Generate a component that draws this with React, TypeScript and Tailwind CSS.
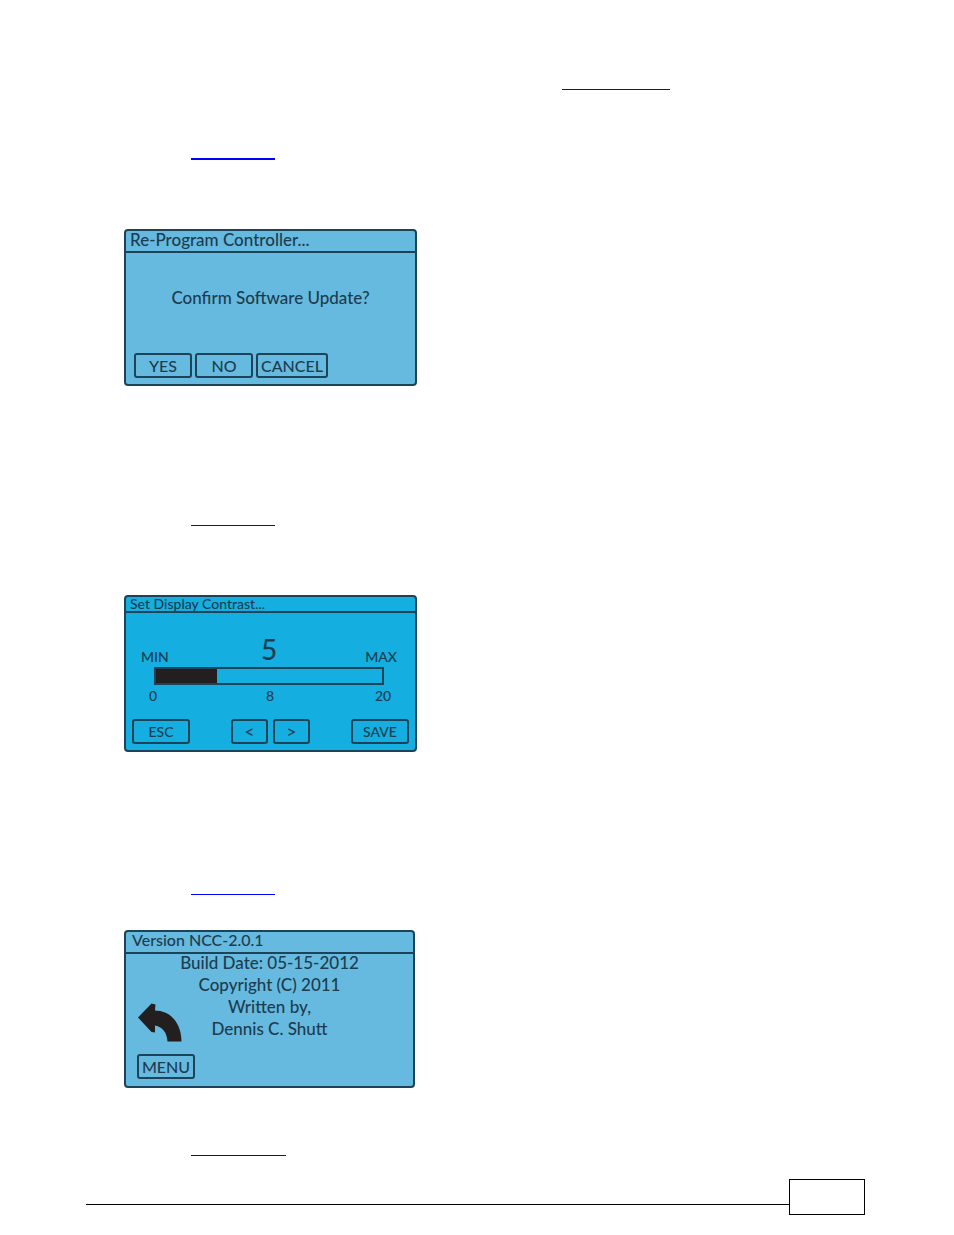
import type { ReactNode } from "react";

function LcdButton({ children, className = "w-[58px]" }: { children: ReactNode; className?: string }) {
  return (
    <button
      type="button"
      className={`flex h-[25px] items-center justify-center rounded-[3px] border-2 border-[#1d4358] ${className}`}
    >
      {children}
    </button>
  );
}

function Screen({ children, className }: { children: ReactNode; className: string }) {
  return (
    <section
      className={`ml-[38px] flex flex-col rounded-[4px] border-2 border-[#1d4358] font-medium text-[#1d3c4f] ${className}`}
    >
      {children}
    </section>
  );
}

function SectionLink({ className, label }: { className: string; label: string }) {
  return <a href="#" aria-label={label} className={`block h-5 border-[#0000ff] ${className}`} />;
}

function BackArrow() {
  return (
    <svg viewBox="0 0 45 40" className="h-10 w-[45px]" fill="#231f20" aria-hidden="true">
      <path d="M14.5 1.5 L18.5 2.5 L18 8.5 C34 8.500 44.500 22 44.500 39.5 H30.5 C30 31 26 25 18 23.5 L18 30.500 L14.500 30 L1 15.5 Z" />
    </svg>
  );
}

export default function App() {
  return (
    <div className="bg-white pt-[70px] pr-[89px] pb-5 pl-[86px] font-['Lato',sans-serif]">
      <main>
        <div className="flex justify-end pr-[195px]">
          <SectionLink label="Previous section" className="w-[108px] border-b" />
        </div>

        <SectionLink label="Software update" className="mt-[50px] ml-[105px] w-[84px] border-b-2" />

        {/* Software update prompt */}
        <Screen className="mt-[69px] h-[157px] w-[293px] bg-[#66badf] text-[17px]">
          <h2 className="h-[22px] border-b-2 border-[#1d4358] pl-1 leading-[18px]">Re-Program Controller...</h2>
          <p className="mt-8 text-center leading-[26px]">Confirm Software Update?</p>
          <div className="mt-auto mb-[6px] ml-2 flex gap-[3px] text-[16px]">
            <LcdButton>YES</LcdButton>
            <LcdButton>NO</LcdButton>
            <LcdButton className="w-[72px]">CANCEL</LcdButton>
          </div>
        </Screen>

        <SectionLink label="Display contrast" className="mt-[120px] ml-[105px] w-[84px] border-b" />

        {/* Display contrast */}
        <Screen className="mt-[69px] h-[157px] w-[293px] bg-[#14aee0] text-[14px]">
          <h2 className="h-4 border-b-2 border-[#1d4358] pl-1 leading-[14px]">Set Display Contrast...</h2>
          <div className="mt-[22px] flex h-8 items-end justify-between pr-[18px] pl-[15px] leading-5">
            <label htmlFor="contrast" className="w-8">MIN</label>
            <output htmlFor="contrast" className="text-[28px] leading-9">5</output>
            <span className="w-8 text-right">MAX</span>
          </div>
          <input
            id="contrast"
            type="range"
            min={0}
            max={20}
            defaultValue={5}
            className="mr-[31px] ml-7 h-[18px] shrink-0 appearance-none border-2 border-[#1d4358] bg-[linear-gradient(to_right,#231f20_27%,transparent_27%)] [&::-webkit-slider-thumb]:w-0 [&::-webkit-slider-thumb]:appearance-none"
          />
          <div className="flex justify-between pr-6 pl-[23px] leading-[22px]">
            <span className="w-4">0</span>
            <span>8</span>
            <span className="w-4">20</span>
          </div>
          <div className="mt-auto mr-[6px] mb-[6px] ml-[6px] flex justify-between">
            <LcdButton>ESC</LcdButton>
            <div className="flex gap-[5px] text-[17px] leading-4">
              <LcdButton className="w-[37px]">&lt;</LcdButton>
              <LcdButton className="w-[37px]">&gt;</LcdButton>
            </div>
            <LcdButton>SAVE</LcdButton>
          </div>
        </Screen>

        <SectionLink label="Version" className="mt-[123px] ml-[105px] w-[84px] border-b" />

        {/* Version info */}
        <Screen className="mt-[35px] h-[158px] w-[291px] bg-[#66badf] text-[16px]">
          <h2 className="h-[22px] border-b-2 border-[#1d4358] pl-[6px] leading-4">Version NCC-2.0.1</h2>
          <div className="grid flex-1">
            <p className="col-start-1 row-start-1 -mt-[2px] text-center text-[17px] leading-[22px]">
              Build Date: 05-15-2012
              <br />
              Copyright (C) 2011
              <br />
              Written by,
              <br />
              Dennis C. Shutt
            </p>
            <div className="col-start-1 row-start-1 mb-[7px] ml-[11px] flex flex-col items-start gap-3 self-end justify-self-start">
              <BackArrow />
              <LcdButton>MENU</LcdButton>
            </div>
          </div>
        </Screen>

        <SectionLink label="Next section" className="mt-12 ml-[105px] w-[95px] border-b" />
      </main>

      <footer className="mt-[23px] flex">
        <div className="mt-[25px] flex-1 border-t border-black" />
        <div className="h-9 w-[76px] border border-black" />
      </footer>
    </div>
  );
}
